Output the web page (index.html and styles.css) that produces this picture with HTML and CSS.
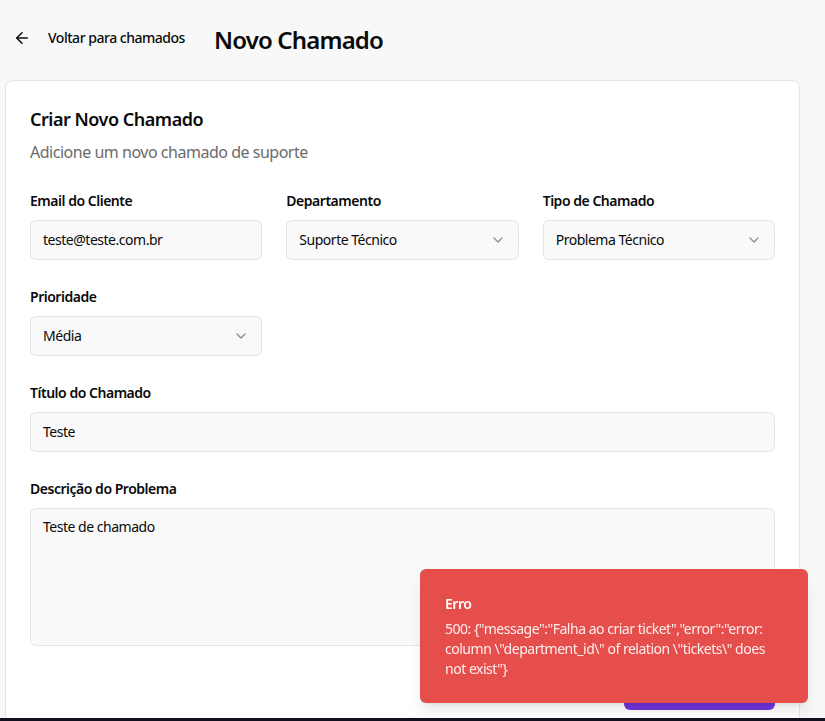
FILE: index.html
```html
<!DOCTYPE html>
<html lang="pt-BR">
<head>
<meta charset="utf-8">
<title>Novo Chamado</title>
<link rel="stylesheet" href="styles.css">
</head>
<body>
<div class="page">
  <header class="topbar">
    <a class="back" href="#">
      <svg class="back-icon" viewBox="0 0 24 24" fill="none" stroke="currentColor" stroke-width="2" stroke-linecap="round" stroke-linejoin="round"><path d="m12 19-7-7 7-7"/><path d="M19 12H5"/></svg>
      <span>Voltar para chamados</span>
    </a>
    <h1 class="page-title">Novo Chamado</h1>
  </header>

  <section class="card">
    <h2 class="card-title">Criar Novo Chamado</h2>
    <p class="card-desc">Adicione um novo chamado de suporte</p>

    <form class="form">
      <div class="grid3">
        <div class="field">
          <label class="label">Email do Cliente</label>
          <div class="input">teste@teste.com.br</div>
        </div>
        <div class="field">
          <label class="label">Departamento</label>
          <div class="input select"><span>Suporte Técnico</span><svg class="chev" viewBox="0 0 24 24" fill="none" stroke="currentColor" stroke-width="2" stroke-linecap="round" stroke-linejoin="round"><path d="m6 9 6 6 6-6"/></svg></div>
        </div>
        <div class="field">
          <label class="label">Tipo de Chamado</label>
          <div class="input select"><span>Problema Técnico</span><svg class="chev" viewBox="0 0 24 24" fill="none" stroke="currentColor" stroke-width="2" stroke-linecap="round" stroke-linejoin="round"><path d="m6 9 6 6 6-6"/></svg></div>
        </div>
        <div class="field">
          <label class="label">Prioridade</label>
          <div class="input select"><span>Média</span><svg class="chev" viewBox="0 0 24 24" fill="none" stroke="currentColor" stroke-width="2" stroke-linecap="round" stroke-linejoin="round"><path d="m6 9 6 6 6-6"/></svg></div>
        </div>
      </div>

      <div class="field">
        <label class="label">Título do Chamado</label>
        <div class="input">Teste</div>
      </div>

      <div class="field">
        <label class="label">Descrição do Problema</label>
        <div class="input textarea">Teste de chamado</div>
      </div>

      <div class="actions">
        <button type="button" class="btn-primary">Criar Chamado</button>
      </div>
    </form>
  </section>
</div>

<div class="toast" role="alert">
  <div class="toast-title">Erro</div>
  <div class="toast-desc">500: {"message":"Falha ao criar ticket","error":"error: column \"department_id\" of relation \"tickets\" does not exist"}</div>
</div>

<div class="taskbar"></div>
</body>
</html>
```

FILE: styles.css
```css
* { box-sizing: border-box; }

html, body {
  margin: 0;
  padding: 0;
}

body {
  background: #f8f8f8;
  font-family: "Noto Sans", "Open Sans", sans-serif;
  letter-spacing: -0.03em;
  color: #0a0a0a;
  overflow: hidden;
  height: 721px;
}

.page {
  padding: 0 25px 0 5px;
}

.topbar {
  display: flex;
  align-items: center;
  height: 80px;
  padding-bottom: 4px;
}

.back {
  display: flex;
  align-items: center;
  gap: 17px;
  margin-left: 8px;
  color: #0a0a0a;
  text-decoration: none;
  font-size: 14px;
  font-weight: 500;
  line-height: 20px;
}

.back-icon {
  width: 18px;
  height: 18px;
}

.page-title {
  margin: 0 0 0 29px;
  font-size: 24px;
  font-weight: 600;
  line-height: 32px;
  letter-spacing: -0.035em;
  position: relative;
  top: 2px;
}

.card {
  background: #ffffff;
  border: 1px solid #e5e5e5;
  border-radius: 8px;
  padding: 24px 24px 24px 24px;
  height: 700px;
}

.card-title {
  margin: 0;
  font-size: 18px;
  font-weight: 600;
  line-height: 28px;
}

.card-desc {
  margin: 7px 0 0;
  font-size: 16px;
  line-height: 24px;
  color: #6b6b6b;
}

.form {
  margin-top: 28px;
  display: flex;
  flex-direction: column;
  gap: 28px;
}

.grid3 {
  display: grid;
  grid-template-columns: repeat(3, 1fr);
  column-gap: 24px;
  row-gap: 28px;
}

.field {
  display: flex;
  flex-direction: column;
  gap: 8px;
}

.label {
  font-size: 14px;
  font-weight: 600;
  line-height: 20px;
  margin-top: -1px;
  margin-bottom: 1px;
}

.input {
  height: 40px;
  border: 1px solid #e5e5e5;
  border-radius: 6px;
  background: #f9f9f9;
  padding: 0 12px;
  display: flex;
  align-items: center;
  font-size: 14px;
  line-height: 20px;
}

.select {
  justify-content: space-between;
}

.chev {
  width: 16px;
  height: 16px;
  color: #8f8f8f;
}

.textarea {
  height: 138px;
  align-items: flex-start;
  padding-top: 8px;
}

.actions {
  display: flex;
  justify-content: flex-end;
  margin-top: -4px;
}

.btn-primary {
  width: 151px;
  height: 40px;
  border: 0;
  border-radius: 6px;
  background: #7134da;
  color: #ffffff;
  font-family: inherit;
  font-size: 14px;
  font-weight: 500;
}

.toast {
  position: fixed;
  right: 17px;
  bottom: 18px;
  width: 388px;
  background: #e54e4b;
  color: #ffffff;
  border-radius: 6px;
  padding: 25px 24px 24px 25px;
  box-shadow: 0 10px 15px -3px rgba(0,0,0,0.1), 0 4px 6px -4px rgba(0,0,0,0.1);
}

.toast-title {
  font-size: 14px;
  font-weight: 600;
  line-height: 20px;
}

.toast-desc {
  margin-top: 5px;
  font-size: 14px;
  line-height: 20px;
  opacity: 0.9;
}

.taskbar {
  position: fixed;
  left: 0;
  right: 0;
  bottom: 0;
  height: 3px;
  background: #11111d;
}
```
